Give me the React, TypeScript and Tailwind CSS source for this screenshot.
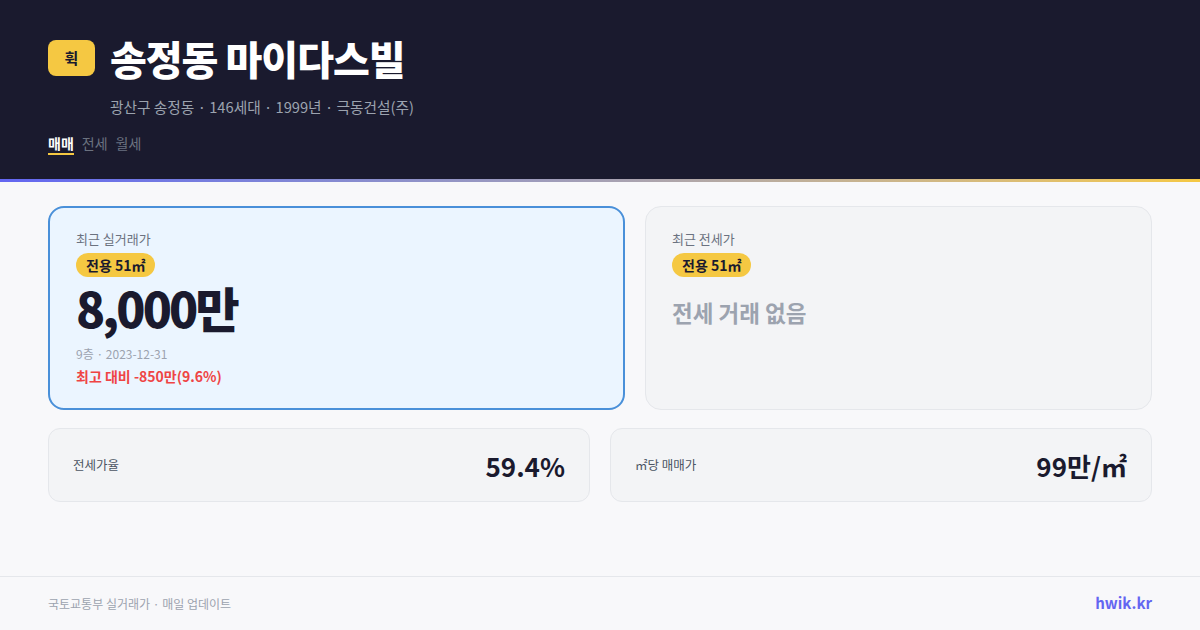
import React from 'react';

const font = { fontFamily: '"Noto Sans CJK KR", "Noto Sans", sans-serif' };

const AreaBadge: React.FC = () => (
  <span className="inline-flex h-6 items-center rounded-full bg-[#f5c842] px-[10px] text-[14px] font-bold leading-none text-[#1a1a2e]">
    전용 51㎡
  </span>
);

const App: React.FC = () => {
  return (
    <div className="flex h-[630px] w-[1200px] flex-col bg-[#f8f8fa]" style={font}>
      {/* Header */}
      <header className="bg-[#1a1a2e] px-12 pt-[34px] pb-6">
        <div className="flex items-center gap-[15px]">
          <div className="flex h-9 w-[47px] items-center justify-center rounded-lg bg-[#f5c842] text-[15px] font-bold text-[#1a1a2e]">
            휙
          </div>
          <h1 className="text-[40px] font-black leading-[48px] tracking-tight text-white">송정동 마이다스빌</h1>
        </div>
        <p className="mt-[14px] ml-[62px] text-[14.7px] leading-[22px] text-[#9ca3af]">
          광산구 송정동 · 146세대 · 1999년 · 극동건설(주)
        </p>
        <nav className="mt-[15px] flex gap-2 text-[14px] leading-5">
          <span className="border-b-2 border-[#f5c842] font-bold text-white">매매</span>
          <span className="border-b-2 border-transparent text-[#6b7280]">전세</span>
          <span className="border-b-2 border-transparent text-[#6b7280]">월세</span>
        </nav>
      </header>
      <div className="h-[3px] bg-gradient-to-r from-[#6366f1] to-[#f5c842]" />

      {/* Main */}
      <main className="flex-1 px-12 pt-6">
        <div className="grid grid-cols-[577px_1fr] gap-5">
          <div className="rounded-2xl border-2 border-[#4a90d9] bg-[#ebf5ff] px-[26px] pt-[22px] pb-[22px]">
            <div className="text-[13px] leading-[18px] text-[#6b7280]">최근 실거래가</div>
            <div className="mt-[5px] flex">
              <AreaBadge />
            </div>
            <div className="mt-[5px] text-[48px] font-black leading-[50px] tracking-[-0.06em] text-[#1a1a2e]">8,000만</div>
            <div className="mt-[14px] text-[12px] leading-4 text-[#9ca3af]">9층 · 2023-12-31</div>
            <div className="mt-[4px] text-[14px] font-bold leading-5 text-[#ef4444]">최고 대비 -850만(9.6%)</div>
          </div>
          <div className="rounded-2xl border border-[#e5e7eb] bg-[#f3f4f6] px-[26px] pt-[23px]">
            <div className="text-[13px] leading-[18px] text-[#6b7280]">최근 전세가</div>
            <div className="mt-[5px] flex">
              <AreaBadge />
            </div>
            <div className="mt-[19px] text-[22.5px] font-bold leading-8 text-[#9ca3af]">전세 거래 없음</div>
          </div>
        </div>

        <div className="mt-[18px] grid grid-cols-2 gap-5">
          <div className="flex h-[74px] items-center justify-between rounded-xl border border-[#e5e7eb] bg-[#f3f4f6] px-6">
            <span className="text-[12.5px] text-[#4b5563]">전세가율</span>
            <span className="text-[26px] font-bold text-[#1a1a2e]">59.4%</span>
          </div>
          <div className="flex h-[74px] items-center justify-between rounded-xl border border-[#e5e7eb] bg-[#f3f4f6] px-6">
            <span className="text-[12.5px] text-[#4b5563]">㎡당 매매가</span>
            <span className="text-[26px] font-bold text-[#1a1a2e]">99만/㎡</span>
          </div>
        </div>
      </main>

      {/* Footer */}
      <footer className="flex h-[54px] items-center justify-between border-t border-[#e5e7eb] px-12">
        <span className="text-[12px] text-[#9ca3af]">국토교통부 실거래가 · 매일 업데이트</span>
        <span className="text-[15px] font-bold text-[#6366f1]">hwik.kr</span>
      </footer>
    </div>
  );
};

export default App;
